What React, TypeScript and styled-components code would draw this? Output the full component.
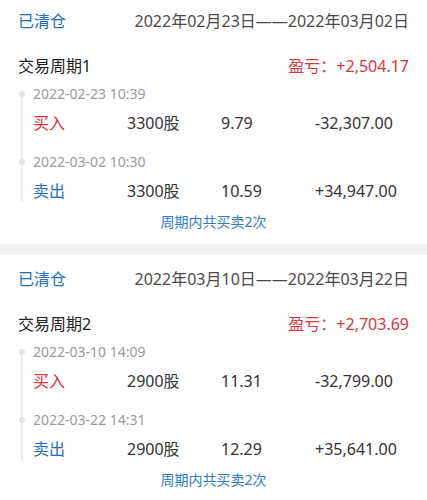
import React from "react";
import styled, { createGlobalStyle } from "styled-components";

const GlobalStyle = createGlobalStyle`
  html, body {
    margin: 0;
    padding: 0;
    background: #ffffff;
  }
  body {
    font-family: "Noto Sans", "Noto Sans CJK SC", sans-serif;
    -webkit-font-smoothing: antialiased;
  }
`;

const Page = styled.div`
  margin-top: -3px;
  display: flex;
  flex-direction: column;
`;

const Section = styled.section`
  padding: 0 18px 12px;
  background: #ffffff;
`;

const Divider = styled.div`
  height: 11px;
  background: #f2f2f2;
`;

const Header = styled.div`
  height: 48px;
  display: flex;
  align-items: center;
  justify-content: space-between;
`;

const Status = styled.span`
  font-size: 16px;
  color: #2370b8;
  line-height: 24px;
`;

const Range = styled.span`
  font-size: 16px;
  color: #4a4a4a;
  line-height: 24px;
`;

const TitleRow = styled.div`
  margin-top: 8px;
  height: 24px;
  display: flex;
  align-items: center;
  justify-content: space-between;
`;

const Title = styled.span`
  font-size: 16px;
  color: #222222;
`;

const Profit = styled.span`
  font-size: 16px;
  color: #d7363d;
`;

const Timeline = styled.div`
  position: relative;
  margin-top: 6px;
  padding-left: 15px;
  display: flex;
  flex-direction: column;
  gap: 17px;

  &::before {
    content: "";
    position: absolute;
    left: 3px;
    top: 9px;
    bottom: 0;
    width: 2px;
    background: #eeeeee;
  }
`;

const Item = styled.div`
  display: flex;
  flex-direction: column;
`;

const Time = styled.div`
  position: relative;
  font-size: 14px;
  line-height: 22px;
  color: #9a9a9a;

  &::before {
    content: "";
    position: absolute;
    left: -14px;
    top: 8px;
    width: 6px;
    height: 6px;
    border-radius: 50%;
    background: #e4e4e4;
  }
`;

const TradeRow = styled.div`
  margin-top: 7px;
  display: grid;
  grid-template-columns: repeat(4, 1fr);
  font-size: 16px;
  line-height: 22px;
  color: #333333;
`;

const Side = styled.span<{ $buy: boolean }>`
  color: ${(p) => (p.$buy ? "#d7363d" : "#2370b8")};
`;

const Cell = styled.span``;

const Footer = styled.div`
  margin-top: 10px;
  text-align: center;
  font-size: 14px;
  line-height: 20px;
  color: #2f7cc4;
`;

type Trade = {
  time: string;
  buy: boolean;
  qty: string;
  price: string;
  amount: string;
};

type Cycle = {
  range: string;
  title: string;
  profit: string;
  trades: Trade[];
};

const cycles: Cycle[] = [
  {
    range: "2022年02月23日——2022年03月02日",
    title: "交易周期1",
    profit: "+2,504.17",
    trades: [
      { time: "2022-02-23 10:39", buy: true, qty: "3300股", price: "9.79", amount: "-32,307.00" },
      { time: "2022-03-02 10:30", buy: false, qty: "3300股", price: "10.59", amount: "+34,947.00" },
    ],
  },
  {
    range: "2022年03月10日——2022年03月22日",
    title: "交易周期2",
    profit: "+2,703.69",
    trades: [
      { time: "2022-03-10 14:09", buy: true, qty: "2900股", price: "11.31", amount: "-32,799.00" },
      { time: "2022-03-22 14:31", buy: false, qty: "2900股", price: "12.29", amount: "+35,641.00" },
    ],
  },
];

export default function App() {
  return (
    <>
      <GlobalStyle />
      <Page>
        {cycles.map((c, i) => (
          <React.Fragment key={c.title}>
            {i > 0 && <Divider />}
            <Section>
              <Header>
                <Status>已清仓</Status>
                <Range>{c.range}</Range>
              </Header>
              <TitleRow>
                <Title>{c.title}</Title>
                <Profit>盈亏：{c.profit}</Profit>
              </TitleRow>
              <Timeline>
                {c.trades.map((t) => (
                  <Item key={t.time}>
                    <Time>{t.time}</Time>
                    <TradeRow>
                      <Side $buy={t.buy}>{t.buy ? "买入" : "卖出"}</Side>
                      <Cell>{t.qty}</Cell>
                      <Cell>{t.price}</Cell>
                      <Cell>{t.amount}</Cell>
                    </TradeRow>
                  </Item>
                ))}
              </Timeline>
              <Footer>周期内共买卖{c.trades.length}次</Footer>
            </Section>
          </React.Fragment>
        ))}
      </Page>
    </>
  );
}
